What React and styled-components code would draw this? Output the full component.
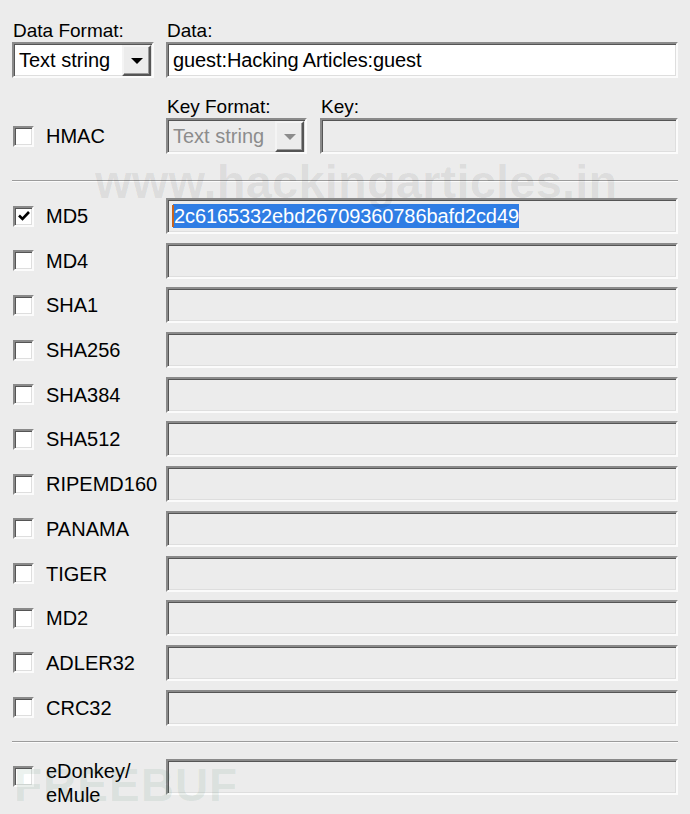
import styled, { createGlobalStyle } from 'styled-components';

const GlobalStyle = createGlobalStyle`
  html, body {
    margin: 0;
    background: #ececec;
  }
  body {
    font-family: "Liberation Sans", Arial, sans-serif;
    font-size: 20px;
    color: #000;
  }
`;

const HASHES = [
  { name: 'MD5', checked: true, value: '2c6165332ebd26709360786bafd2cd49' },
  { name: 'MD4' },
  { name: 'SHA1' },
  { name: 'SHA256' },
  { name: 'SHA384' },
  { name: 'SHA512' },
  { name: 'RIPEMD160' },
  { name: 'PANAMA' },
  { name: 'TIGER' },
  { name: 'MD2' },
  { name: 'ADLER32' },
  { name: 'CRC32' },
];

const CheckMark = () => (
  <svg width="14" height="14" viewBox="0 0 14 14">
    <path d="M2 6.5 L5.5 10 L12 3" fill="none" stroke="#000" strokeWidth="2.6" />
  </svg>
);

const Combo = ({ disabled }) => (
  <ComboBox $disabled={disabled}>
    <ComboText $disabled={disabled}>Text string</ComboText>
    <DropButton>
      <Arrow $disabled={disabled} />
    </DropButton>
  </ComboBox>
);

const Check = ({ checked }) => (
  <CheckBox>{checked && <CheckMark />}</CheckBox>
);

const App = () => (
  <>
    <GlobalStyle />
    <Dialog>
      <TopRow>
        <Group $width="142px">
          <Label>Data Format:</Label>
          <Combo />
        </Group>
        <Group $grow>
          <Label>Data:</Label>
          <Field $white>guest:Hacking Articles:guest</Field>
        </Group>
      </TopRow>

      <HmacRow>
        <CheckCell>
          <Check />
          <CheckLabel>HMAC</CheckLabel>
        </CheckCell>
        <Group $width="141px">
          <Label>Key Format:</Label>
          <Combo disabled />
        </Group>
        <Group $grow>
          <Label>Key:</Label>
          <Field />
        </Group>
      </HmacRow>

      <Separator $top="26px" $bottom="16px" />

      <HashList>
        {HASHES.map((h) => (
          <HashRow key={h.name}>
            <CheckCell>
              <Check checked={h.checked} />
              <CheckLabel>{h.name}</CheckLabel>
            </CheckCell>
            <Field>
              {h.value && (
                <Selected>
                  <Caret />
                  {h.value}
                </Selected>
              )}
            </Field>
          </HashRow>
        ))}
      </HashList>

      <Separator $top="15px" $bottom="16px" />

      <HashRow>
        <CheckCell>
          <Check />
          <CheckLabel $lines>
            eDonkey/
            <br />
            eMule
          </CheckLabel>
        </CheckCell>
        <Field />
      </HashRow>

      <SiteMark>www.hackingarticles.in</SiteMark>
      <BufMark>FREEBUF</BufMark>
    </Dialog>
  </>
);

export default App;

const Dialog = styled.div`
  position: relative;
  width: 690px;
  height: 814px;
  box-sizing: border-box;
  padding: 20px 12px 0 12px;
  overflow: hidden;
`;

const TopRow = styled.div`
  display: flex;
  gap: 12px;
`;

const HmacRow = styled.div`
  display: grid;
  grid-template-columns: 154px 141px 1fr;
  margin-top: 18px;
  & > :first-child {
    align-self: end;
    height: 36px;
  }
  & > :last-child {
    margin-left: 13px;
  }
`;

const Group = styled.div`
  display: flex;
  flex-direction: column;
  width: ${(p) => p.$width || 'auto'};
  flex: ${(p) => (p.$grow ? 1 : 'none')};
  min-width: 0;
`;

const Label = styled.div`
  height: 22px;
  line-height: 22px;
  font-size: 19px;
  padding-left: 1px;
`;

const sunken = `
  box-sizing: border-box;
  border: 2px solid;
  border-color: #8a8a8a #fbfbfb #fbfbfb #8a8a8a;
  box-shadow: inset 1px 1px 0 #555, inset -1px -1px 0 #dedede;
`;

const Field = styled.div`
  ${sunken}
  height: 36px;
  background: ${(p) => (p.$white ? '#fff' : '#ececec')};
  display: flex;
  align-items: center;
  padding-left: 5px;
  white-space: nowrap;
  overflow: hidden;
  letter-spacing: -0.1px;
`;

const ComboBox = styled.div`
  ${sunken}
  height: 36px;
  display: flex;
  align-items: center;
  background: ${(p) => (p.$disabled ? '#ececec' : '#fff')};
  padding: 0 1px 0 5px;
`;

const ComboText = styled.span`
  flex: 1;
  color: ${(p) => (p.$disabled ? '#8c8c8c' : '#000')};
  white-space: nowrap;
`;

const DropButton = styled.div`
  box-sizing: border-box;
  width: 29px;
  height: 31px;
  background: #ececec;
  border: 2px solid;
  border-color: #f4f4f4 #555 #555 #f4f4f4;
  box-shadow: inset -1px -1px 0 #9a9a9a;
  display: flex;
  align-items: center;
  justify-content: center;
`;

const Arrow = styled.span`
  width: 0;
  height: 0;
  border-left: 6px solid transparent;
  border-right: 6px solid transparent;
  border-top: 6px solid ${(p) => (p.$disabled ? '#8c8c8c' : '#000')};
  margin-top: 2px;
`;

const Separator = styled.div`
  height: 1px;
  background: #9c9c9c;
  border-bottom: 1px solid #fbfbfb;
  margin: ${(p) => p.$top} 0 ${(p) => p.$bottom} 0;
`;

const HashList = styled.div`
  display: flex;
  flex-direction: column;
  gap: 8.7px;
`;

const HashRow = styled.div`
  display: grid;
  grid-template-columns: 154px 1fr;
  grid-template-rows: 36px;
  align-items: center;
`;

const CheckCell = styled.div`
  display: flex;
  align-items: center;
  gap: 12px;
  padding-left: 1px;
  white-space: nowrap;
  height: 36px;
`;

const CheckBox = styled.div`
  ${sunken}
  width: 21px;
  height: 21px;
  background: #fff;
  display: flex;
  align-items: center;
  justify-content: center;
  flex: none;
`;

const CheckLabel = styled.span`
  line-height: ${(p) => (p.$lines ? '24px' : '22px')};
  margin: ${(p) => (p.$lines ? '-2px 0 -14px 0' : '0')};
`;

const Selected = styled.span`
  position: relative;
  background: #2f7de4;
  color: #fff;
  padding-left: 1px;
  line-height: 24px;
`;

const Caret = styled.span`
  position: absolute;
  left: -1px;
  top: 1px;
  bottom: 1px;
  width: 2px;
  background: #c8641e;
`;

const SiteMark = styled.div`
  position: absolute;
  left: 95px;
  top: 154px;
  font-size: 47px;
  font-weight: bold;
  color: rgba(0, 0, 0, 0.07);
  pointer-events: none;
  white-space: nowrap;
  letter-spacing: 0.2px;
`;

const BufMark = styled.div`
  position: absolute;
  left: 14px;
  top: 758px;
  font-size: 46px;
  font-weight: bold;
  color: rgba(60, 120, 90, 0.1);
  pointer-events: none;
  white-space: nowrap;
  letter-spacing: 1px;
`;
